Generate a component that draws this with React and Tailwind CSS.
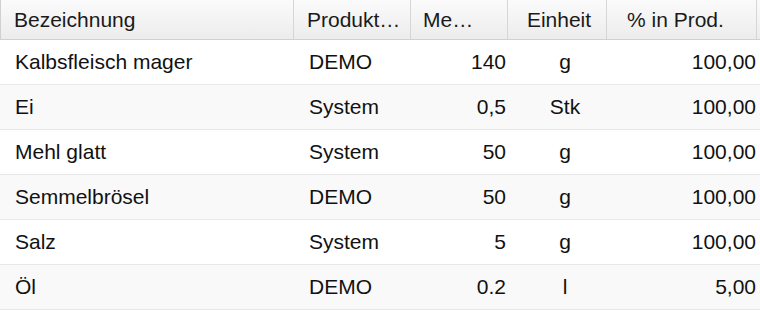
import React from "react";

const rows = [
	{ name: "Kalbsfleisch mager", group: "DEMO", qty: "140", unit: "g", pct: "100,00" },
	{ name: "Ei", group: "System", qty: "0,5", unit: "Stk", pct: "100,00" },
	{ name: "Mehl glatt", group: "System", qty: "50", unit: "g", pct: "100,00" },
	{ name: "Semmelbrösel", group: "DEMO", qty: "50", unit: "g", pct: "100,00" },
	{ name: "Salz", group: "System", qty: "5", unit: "g", pct: "100,00" },
	{ name: "Öl", group: "DEMO", qty: "0.2", unit: "l", pct: "5,00" },
];

export default function App() {
	return (
		<div className="w-[760px] h-[310px] overflow-hidden bg-white text-[21px] text-[#111] font-['Liberation_Sans',Arial,sans-serif]">
			<div className="grid grid-cols-[293px_117px_97px_99px_1fr] h-10 border-b border-[#d0d0d0] border-l bg-gradient-to-b from-[#fbfbfb] to-[#ececec] text-[#1a1a1a]">
				<div className="flex items-center pl-[13px] border-r border-[#d6d6d6]">Bezeichnung</div>
				<div className="flex items-center pl-[13px] border-r border-[#d6d6d6]">Produkt…</div>
				<div className="flex items-center pl-[12px] border-r border-[#d6d6d6]">Me…</div>
				<div className="flex items-center justify-center pl-1 border-r border-[#d6d6d6]">Einheit</div>
				<div className="flex items-center pl-[20px] border-r border-[#d6d6d6] mr-[3px]">% in Prod.</div>
			</div>
			{rows.map((r, i) => (
				<div
					key={i}
					className={"grid grid-cols-[293px_117px_97px_99px_1fr] h-[45px] border-b border-[#e8e8e8] " + (i % 2 === 1 ? "bg-[#f9f9f9]" : "bg-white")}
				>
					<div className="flex items-center pl-[15px] pb-[1px]">{r.name}</div>
					<div className="flex items-center pl-[16px] pb-[1px]">{r.group}</div>
					<div className="flex items-center justify-end pr-[1px] pb-[1px]">{r.qty}</div>
					<div className="flex items-center justify-center pl-[17px] pb-[1px]">{r.unit}</div>
					<div className="flex items-center justify-end pr-[4px] pb-[1px]">{r.pct}</div>
				</div>
			))}
		</div>
	);
}
